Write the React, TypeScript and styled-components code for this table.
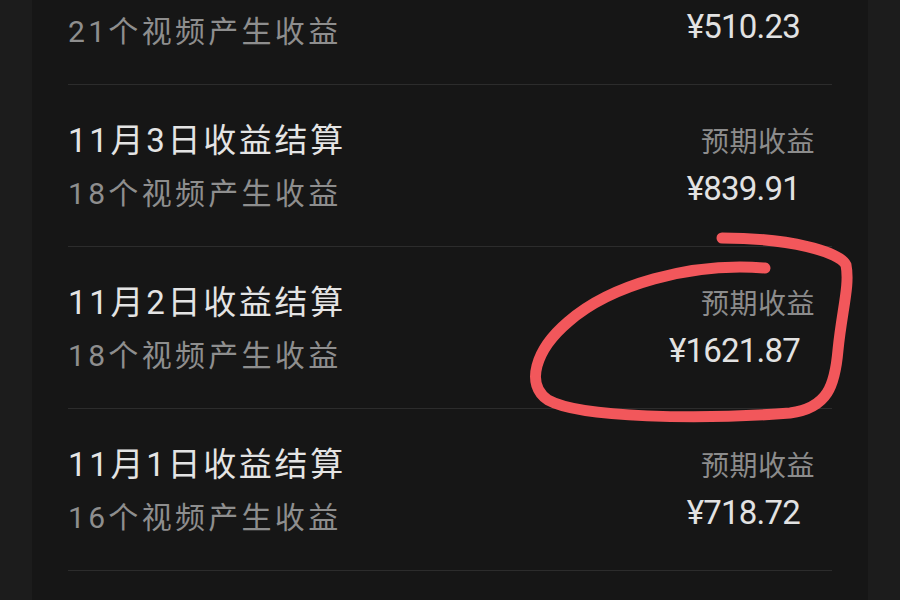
import React from 'react';
import styled, { createGlobalStyle } from 'styled-components';

const GlobalStyle = createGlobalStyle`
  html, body {
    margin: 0;
    padding: 0;
    background: #1c1c1c;
  }
`;

type Settlement = {
  title: string;
  videos: number;
  amount: string;
};

const SETTLEMENTS: Settlement[] = [
  { title: '11月4日收益结算', videos: 21, amount: '¥510.23' },
  { title: '11月3日收益结算', videos: 18, amount: '¥839.91' },
  { title: '11月2日收益结算', videos: 18, amount: '¥1621.87' },
  { title: '11月1日收益结算', videos: 16, amount: '¥718.72' }
];

const FONT = `Roboto, "Noto Sans CJK SC", "Noto Sans", sans-serif`;

const App: React.FC = () => {
  return (
    <>
      <GlobalStyle />
      <Screen>
        <Card>
          <List>
            {SETTLEMENTS.map(item => (
              <Row key={item.title}>
                <Info>
                  <Title>{item.title}</Title>
                  <Subtitle>{item.videos}个视频产生收益</Subtitle>
                </Info>
                <Earnings>
                  <Label>预期收益</Label>
                  <Amount>{item.amount}</Amount>
                </Earnings>
              </Row>
            ))}
          </List>
        </Card>

        {/* hand-drawn marker circle around the 11/2 amount */}
        <Marker viewBox="0 0 900 600" width={900} height={600}>
          <path
            d="M 765 268 C 690 262, 610 285, 568 322 C 535 350, 525 385, 548 400 C 580 418, 700 420, 790 413 C 828 408, 835 385, 838 350 C 842 310, 850 285, 846 265 C 840 252, 790 238, 722 238"
            fill="none"
            stroke="#f2575b"
            strokeWidth={11}
            strokeLinecap="round"
            strokeLinejoin="round"
          />
        </Marker>
      </Screen>
    </>
  );
};

const Screen = styled.div`
  position: relative;
  width: 900px;
  height: 600px;
  overflow: hidden;
  background: #1c1c1c;
  display: flex;
  padding-left: 32px;
  box-sizing: border-box;
`;

const Card = styled.div`
  width: 836px;
  height: 100%;
  background: #161616;
  padding: 0 36px;
  box-sizing: border-box;
  overflow: hidden;
`;

const List = styled.div`
  margin-top: -77px;
  display: flex;
  flex-direction: column;
`;

const Row = styled.div`
  height: 162px;
  box-sizing: border-box;
  border-bottom: 1.5px solid #2c2c2c;
  display: flex;
  justify-content: space-between;
  align-items: flex-start;
  padding: 36px 17px 0 0;
`;

const Info = styled.div`
  display: flex;
  flex-direction: column;
  gap: 15px;
`;

const Title = styled.div`
  font-family: ${FONT};
  font-size: 33px;
  line-height: 40px;
  letter-spacing: 2.7px;
  color: #e4e4e4;
`;

const Subtitle = styled.div`
  font-family: ${FONT};
  font-size: 30px;
  line-height: 36px;
  letter-spacing: 3.3px;
  color: #8e8e8e;
`;

const Earnings = styled.div`
  display: flex;
  flex-direction: column;
  align-items: flex-end;
  padding-top: 5px;
  gap: 11px;
`;

const Label = styled.div`
  font-family: ${FONT};
  font-size: 28px;
  line-height: 34px;
  letter-spacing: 0.5px;
  color: #8c8c8c;
`;

const Amount = styled.div`
  font-family: ${FONT};
  font-size: 33px;
  line-height: 36px;
  letter-spacing: -0.8px;
  color: #e2e2e2;
  padding-right: 15px;
`;

const Marker = styled.svg`
  position: absolute;
  left: 0;
  top: 0;
  pointer-events: none;
`;

export default App;
